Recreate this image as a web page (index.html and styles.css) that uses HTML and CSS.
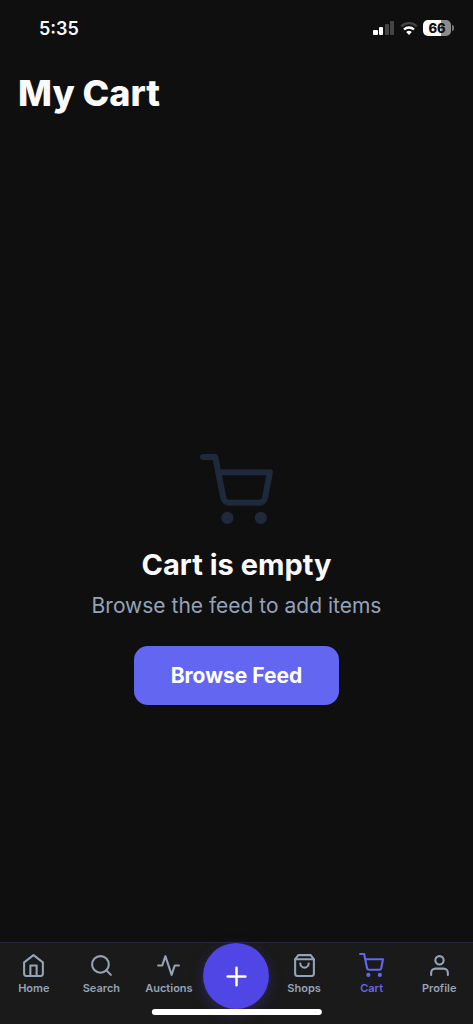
FILE: index.html
```html
<!DOCTYPE html>
<html lang="en">
<head>
<meta charset="utf-8">
<meta name="viewport" content="width=device-width, initial-scale=1">
<title>My Cart</title>
<link rel="stylesheet" href="styles.css">
</head>
<body>
<div class="app">
  <div class="status">
    <time class="clock">5:35</time>
    <div class="indicators">
      <svg class="signal" viewBox="0 0 22 14" aria-hidden="true">
        <rect x="0" y="9" width="5" height="5" rx="1" fill="#fff"/>
        <rect x="6" y="6" width="4" height="8" rx="1" fill="#fff"/>
        <rect x="12" y="3" width="4" height="11" rx="1" fill="#444"/>
        <rect x="17" y="0" width="4" height="14" rx="1" fill="#444"/>
      </svg>
      <svg class="wifi" viewBox="0 0 18 13" aria-hidden="true">
        <path d="M1.2 4.3a11.2 11.2 0 0 1 15.6 0" fill="none" stroke="#444" stroke-width="2.4"/>
        <path d="M4 7.5a7.2 7.2 0 0 1 10 0" fill="none" stroke="#fff" stroke-width="2.4"/>
        <path d="M9 13L6.2 10.1a4 4 0 0 1 5.6 0z" fill="#fff"/>
      </svg>
      <div class="battery"><span class="level">66</span></div>
    </div>
  </div>
  <header class="header"><h1 class="title">My Cart</h1></header>
  <main class="empty">
    <svg class="empty-icon" viewBox="0 0 24 24" aria-hidden="true"><circle cx="9" cy="21" r="1"/><circle cx="20" cy="21" r="1"/><path d="M1 1h4l2.68 13.39a2 2 0 0 0 2 1.61h9.72a2 2 0 0 0 2-1.61L23 6H6"/></svg>
    <h2 class="empty-title">Cart is empty</h2>
    <p class="empty-text">Browse the feed to add items</p>
    <button class="browse" type="button">Browse Feed</button>
  </main>
  <nav class="tabs" aria-label="Main">
    <a class="tab" href="#home"><svg class="icon" viewBox="0 0 24 24" aria-hidden="true"><path d="M3 9l9-7 9 7v11a2 2 0 0 1-2 2H5a2 2 0 0 1-2-2z"/><path d="M9 22V12h6v10"/></svg>Home</a>
    <a class="tab" href="#search"><svg class="icon" viewBox="0 0 24 24" aria-hidden="true"><circle cx="11" cy="11" r="8"/><path d="M21 21l-4.35-4.35"/></svg>Search</a>
    <a class="tab" href="#auctions"><svg class="icon" viewBox="0 0 24 24" aria-hidden="true"><path d="M22 12h-4l-3 9L9 3l-3 9H2"/></svg>Auctions</a>
    <div class="tab-add"><button class="add" type="button" aria-label="Add"><svg class="icon add-icon" viewBox="0 0 24 24" aria-hidden="true"><path d="M12 3.5v17M3.5 12h17"/></svg></button></div>
    <a class="tab" href="#shops"><svg class="icon" viewBox="0 0 24 24" aria-hidden="true"><path d="M6 2L3 6v14a2 2 0 0 0 2 2h14a2 2 0 0 0 2-2V6l-3-4z"/><path d="M3 6h18"/><path d="M16 10a4 4 0 0 1-8 0"/></svg>Shops</a>
    <a class="tab active" href="#cart" aria-current="page"><svg class="icon" viewBox="0 0 24 24" aria-hidden="true"><circle cx="9" cy="21" r="1"/><circle cx="20" cy="21" r="1"/><path d="M1 1h4l2.68 13.39a2 2 0 0 0 2 1.61h9.72a2 2 0 0 0 2-1.61L23 6H6"/></svg>Cart</a>
    <a class="tab" href="#profile"><svg class="icon" viewBox="0 0 24 24" aria-hidden="true"><path d="M20 21v-2a4 4 0 0 0-4-4H8a4 4 0 0 0-4 4v2"/><circle cx="12" cy="7" r="4"/></svg>Profile</a>
    <div class="home-indicator"></div>
  </nav>
</div>
</body>
</html>
```

FILE: styles.css
```css
* { box-sizing: border-box; }

body {
  margin: 0;
  background: #0f0f0f;
  color: #fafafc;
  font-family: Inter, "Liberation Sans", sans-serif;
}

.app {
  display: flex;
  flex-direction: column;
  min-height: 100vh;
}

.status {
  display: flex;
  align-items: center;
  justify-content: space-between;
  height: 56px;
  padding: 0 22px 0 39px;
}

.clock {
  font-size: 18px;
  font-weight: 600;
}

.indicators {
  display: flex;
  align-items: center;
  gap: 5px;
}

.signal { width: 22px; height: 14px; }
.wifi { width: 18px; height: 13px; }

.battery {
  position: relative;
  width: 28px;
  height: 16px;
  border-radius: 5px;
  background: linear-gradient(to right, #fff 66%, #8c8c8c 66%);
  color: #0f0f0f;
  font-size: 13px;
  font-weight: 800;
  line-height: 16px;
  text-align: center;
}

.battery::after {
  content: "";
  position: absolute;
  top: 5px;
  right: -3px;
  width: 2px;
  height: 6px;
  border-radius: 0 2px 2px 0;
  background: #777;
}

.header { padding: 12px 18px; }

.title {
  margin: 0;
  font-size: 36px;
  font-weight: 800;
  line-height: 50px;
}

.empty {
  flex: 1;
  display: flex;
  flex-direction: column;
  align-items: center;
  justify-content: center;
  padding: 86px 24px 0;
  text-align: center;
}

.empty-icon,
.icon {
  fill: none;
  stroke: currentColor;
  stroke-width: 2;
  stroke-linecap: round;
  stroke-linejoin: round;
}

.empty-icon {
  width: 73px;
  height: 73px;
  color: #1e293b;
}

.empty-title {
  margin: 18px 0 0;
  font-size: 29px;
  font-weight: 700;
  line-height: 40px;
}

.empty-text {
  margin: 6px 0 0;
  color: #94a3b8;
  font-size: 21px;
  line-height: 30px;
}

.browse {
  margin: 25px 0 0;
  padding: 15px 37px;
  border: 0;
  border-radius: 14px;
  background: #6366f1;
  color: #fff;
  font: 700 21px/29px Inter, "Liberation Sans", sans-serif;
}

.tabs {
  position: relative;
  display: grid;
  grid-template-columns: repeat(7, minmax(0, 1fr));
  height: 82px;
  border-top: 1px solid #25253a;
  background: #1a1a1a;
}

.tab {
  display: flex;
  flex-direction: column;
  align-items: center;
  gap: 2px;
  padding-top: 10px;
  color: #94a3b8;
  font-size: 11px;
  font-weight: 600;
  line-height: 16px;
  text-decoration: none;
}

.active { color: #6366f1; }

.icon { width: 25px; height: 25px; }

.add-icon { stroke-width: 2.4; }

.tab-add {
  display: flex;
  align-items: flex-start;
  justify-content: center;
}

.add {
  display: grid;
  flex: none;
  place-items: center;
  width: 66px;
  height: 66px;
  padding: 0;
  border: 0;
  border-radius: 50%;
  background: #4f46e5;
  box-shadow: 0 4px 14px rgba(79, 70, 229, 0.3);
  color: #fff;
}

.home-indicator {
  position: absolute;
  bottom: 9px;
  left: 50%;
  width: 36%;
  height: 6px;
  border-radius: 3px;
  background: #fff;
  transform: translateX(-50%);
}
```
